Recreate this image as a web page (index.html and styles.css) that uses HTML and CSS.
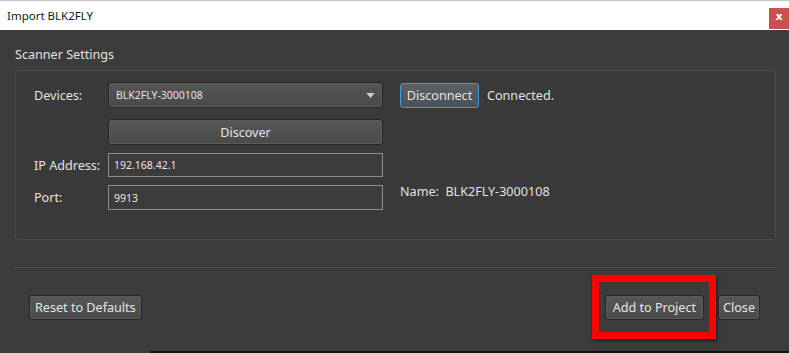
FILE: index.html
```html
<!DOCTYPE html>
<html lang="en">
<head>
    <meta charset="UTF-8">
    <title>Import BLK2FLY</title>
    <link rel="stylesheet" href="styles.css">
</head>
<body>

<div class="dialog">
    <div class="titlebar">
        <span class="title">Import BLK2FLY</span>
        <button class="close-x" aria-label="Close">x</button>
    </div>

    <div class="content">
        <div class="group-title">Scanner Settings</div>
        <div class="group">
            <label class="lbl row-1">Devices:</label>
            <div class="combo row-1">
                <span>BLK2FLY-3000108</span>
                <svg class="arrow" viewBox="0 0 10 6"><path d="M0 0h10L5 6z"/></svg>
            </div>
            <div class="status row-1">
                <button class="btn btn-focus">Disconnect</button>
                <span>Connected.</span>
            </div>

            <button class="btn btn-wide row-2">Discover</button>

            <label class="lbl row-3">IP Address:</label>
            <input class="field row-3" type="text" value="192.168.42.1">

            <label class="lbl row-4">Port:</label>
            <input class="field row-4" type="text" value="9913">
            <div class="name row-4">Name:&nbsp;&nbsp;BLK2FLY-3000108</div>
        </div>

        <div class="separator"></div>

        <div class="actions">
            <button class="btn">Reset to Defaults</button>
            <div class="actions-right">
                <button class="btn btn-add">Add to Project</button>
                <button class="btn btn-close">Close</button>
                <div class="highlight"></div>
            </div>
        </div>
    </div>

    <div class="bottom-strip"></div>
</div>

</body>
</html>
```

FILE: styles.css
```css
body {
    margin: 0;
    font-family: "Noto Sans", "Open Sans", sans-serif;
    background: #3c3c3c;
    overflow: hidden;
}
.dialog {
    width: 789px;
    height: 353px;
    display: flex;
    flex-direction: column;
}
.titlebar {
    height: 29px;
    background: #ffffff;
    border-top: 1px solid #c4c4c4;
    display: flex;
    align-items: center;
    justify-content: space-between;
    padding-left: 7px;
}
.title {
    font-size: 11.5px;
    color: #1a1a1a;
}
.close-x {
    width: 20px;
    height: 21px;
    margin-top: 6px;
    border: none;
    padding: 0 0 3px;
    background: #c9504f;
    color: #ffffff;
    font-family: "DejaVu Sans", sans-serif;
    font-weight: bold;
    font-size: 11px;
    line-height: 18px;
}
.content {
    flex: 1;
    padding: 15px 13px 0 15px;
    color: #e2e2e2;
}
.group-title {
    font-size: 12.6px;
    line-height: 20px;
    margin-bottom: 5px;
}
.group {
    border: 1px solid #4b4b4b;
    border-radius: 3px;
    background: #3a3a3a;
    padding: 11px 0 29px 18px;
    display: grid;
    grid-template-columns: 74px 275px auto;
    grid-template-rows: 26px 29px 24px 25px;
    row-gap: 8px;
}
.row-1 { grid-row: 1; }
.row-2 { grid-row: 2; }
.row-3 { grid-row: 3; }
.row-4 { grid-row: 4; }
.lbl {
    grid-column: 1;
    font-size: 12.6px;
    align-self: center;
}
.combo {
    grid-column: 2;
    display: flex;
    align-items: center;
    justify-content: space-between;
    padding: 0 7px;
    border: 1px solid #262626;
    border-radius: 3px;
    background: linear-gradient(#555555, #4a4a4a);
    box-shadow: inset 0 0 0 1px #5a5a5a;
    font-size: 10.5px;
}
.arrow {
    width: 9px;
    height: 5px;
    fill: #cfcfcf;
}
.status {
    grid-column: 3;
    display: flex;
    align-items: center;
    gap: 8px;
    padding-left: 17px;
    font-size: 12.6px;
}
.btn {
    font-family: "Noto Sans", "Open Sans", sans-serif;
    font-size: 12.6px;
    color: #e4e4e4;
    height: 25px;
    padding: 0 5px;
    border: 1px solid #262626;
    border-radius: 3px;
    background: linear-gradient(#575757, #4b4b4b);
    box-shadow: inset 0 0 0 1px #5c5c5c;
}
.btn-focus {
    border-color: #3a9be8;
    background: linear-gradient(#5c5f63, #4e5155);
    box-shadow: none;
    width: 79px;
    padding: 0;
}
.btn-wide {
    grid-column: 2;
    height: 26px;
    align-self: end;
}
.btn-add {
    padding: 0 7px;
}
.btn-close {
    padding: 0 4px;
}
.field {
    grid-column: 2;
    height: 100%;
    box-sizing: border-box;
    border: 1px solid #8e8e8e;
    background: #3c3c3c;
    color: #e6e6e6;
    font-family: "Noto Sans", sans-serif;
    font-size: 10.5px;
    padding: 0 5px;
    outline: none;
}
.name {
    grid-column: 3;
    padding-left: 17px;
    font-size: 12.6px;
    align-self: start;
    line-height: 14px;
}
.separator {
    margin-top: 27px;
    border-top: 1px solid #4d4d4d;
    margin-left: -1px;
}
.actions {
    display: flex;
    justify-content: space-between;
    align-items: center;
    padding: 27px 16px 0 14px;
}
.actions .btn {
    height: 25px;
}
.actions-right {
    position: relative;
    display: flex;
    gap: 14px;
}
.highlight {
    position: absolute;
    left: -13px;
    top: -20px;
    width: 110px;
    height: 50px;
    border: 7px solid #ff0000;
    box-shadow: 1px 2px 3px rgba(0, 0, 0, 0.5);
}
.bottom-strip {
    height: 2px;
    background: linear-gradient(90deg, #3c3c3c 150px, #141414 150px);
}
```
